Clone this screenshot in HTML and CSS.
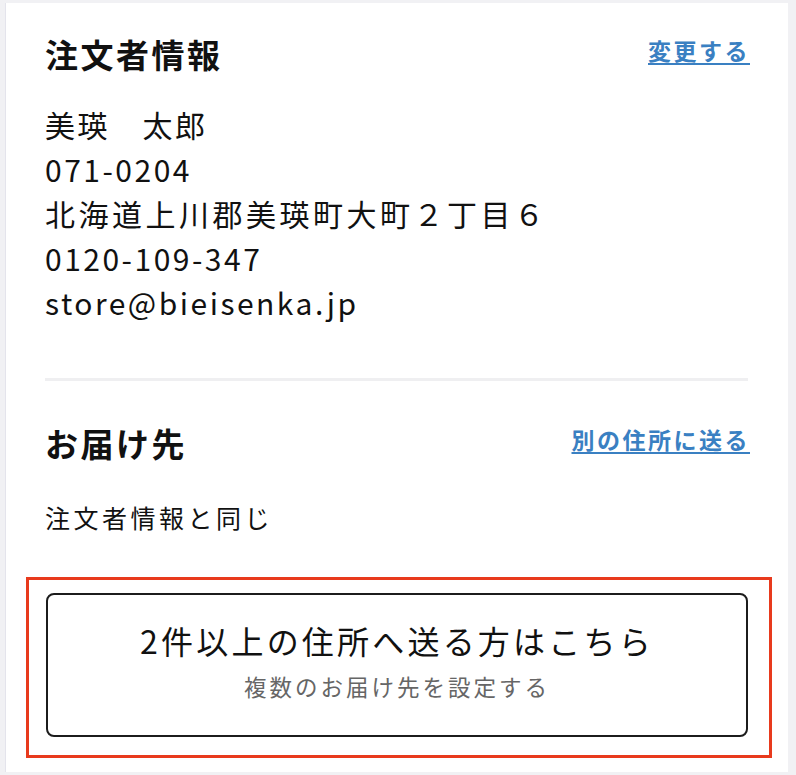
FILE: index.html
```html
<!DOCTYPE html>
<html lang="ja">
<head>
<meta charset="utf-8">
<title>注文者情報</title>
<link rel="stylesheet" href="styles.css">
</head>
<body>
<main class="card">
  <section class="section">
    <div class="section-head">
      <h2 class="section-title">注文者情報</h2>
      <a class="section-link" href="#">変更する</a>
    </div>
    <div class="info">
      <p>美瑛　太郎</p>
      <p>071-0204</p>
      <p class="addr">北海道上川郡美瑛町大町２丁目６</p>
      <p>0120-109-347</p>
      <p>store@bieisenka.jp</p>
    </div>
  </section>
  <hr class="divider">
  <section class="section section-delivery">
    <div class="section-head">
      <h2 class="section-title">お届け先</h2>
      <a class="section-link" href="#">別の住所に送る</a>
    </div>
    <p class="same">注文者情報と同じ</p>
    <div class="highlight">
      <button class="multi-btn" type="button">
        <span class="multi-title">2件以上の住所へ送る方はこちら</span>
        <span class="multi-sub">複数のお届け先を設定する</span>
      </button>
    </div>
  </section>
</main>
</body>
</html>
```

FILE: styles.css
```css
* { box-sizing: border-box; }
html, body { margin: 0; padding: 0; }
body {
  background: #f1f1f4;
  font-family: "Noto Sans CJK JP", "Noto Sans", sans-serif;
  color: #111;
  padding: 3px 8px 3px 6px;
  width: 796px;
  height: 775px;
}
.card {
  background: #fff;
  height: 769px;
  padding: 27px 40px 0 39px;
  box-shadow: -1px 0 0 #e4e4ec;
}
.section-head {
  display: flex;
  justify-content: space-between;
  align-items: flex-start;
}
.section-title {
  margin: 0;
  font-size: 33px;
  line-height: 48px;
  font-weight: 700;
  letter-spacing: 2.5px;
}
.section-link {
  margin-top: 4px;
  font-size: 23px;
  line-height: 32px;
  font-weight: 700;
  color: #3a80c2;
  letter-spacing: 2.5px;
  text-decoration: underline;
  text-decoration-thickness: 2px;
  text-underline-offset: 3px;
  margin-right: -2px;
}
.info { margin-top: 24px; }
.info p {
  margin: 0;
  font-size: 30px;
  line-height: 44.5px;
  letter-spacing: 2.5px;
}
.info .addr { letter-spacing: 3.5px; }
.divider {
  border: 0;
  height: 3px;
  background: #efeff1;
  margin: 53px 0 38px;
}
.same {
  margin: 30px 0 0;
  font-size: 25px;
  line-height: 40px;
  letter-spacing: 3.5px;
}
.highlight {
  margin: 40px -24px 0 -19px;
  border: 3px solid #e83a1d;
  padding: 13px 21px 18px 17px;
}
.multi-btn {
  display: flex;
  flex-direction: column;
  align-items: center;
  width: 100%;
  height: 144px;
  padding: 21px 0 0;
  background: #fff;
  border: 2px solid #1c1c1c;
  border-radius: 8px;
  font-family: inherit;
  cursor: pointer;
}
.multi-title {
  font-size: 32px;
  line-height: 48px;
  letter-spacing: 3.2px;
  color: #111;
}
.multi-sub {
  margin-top: 6px;
  font-size: 22.5px;
  line-height: 32px;
  letter-spacing: 3px;
  color: #666;
}
```
